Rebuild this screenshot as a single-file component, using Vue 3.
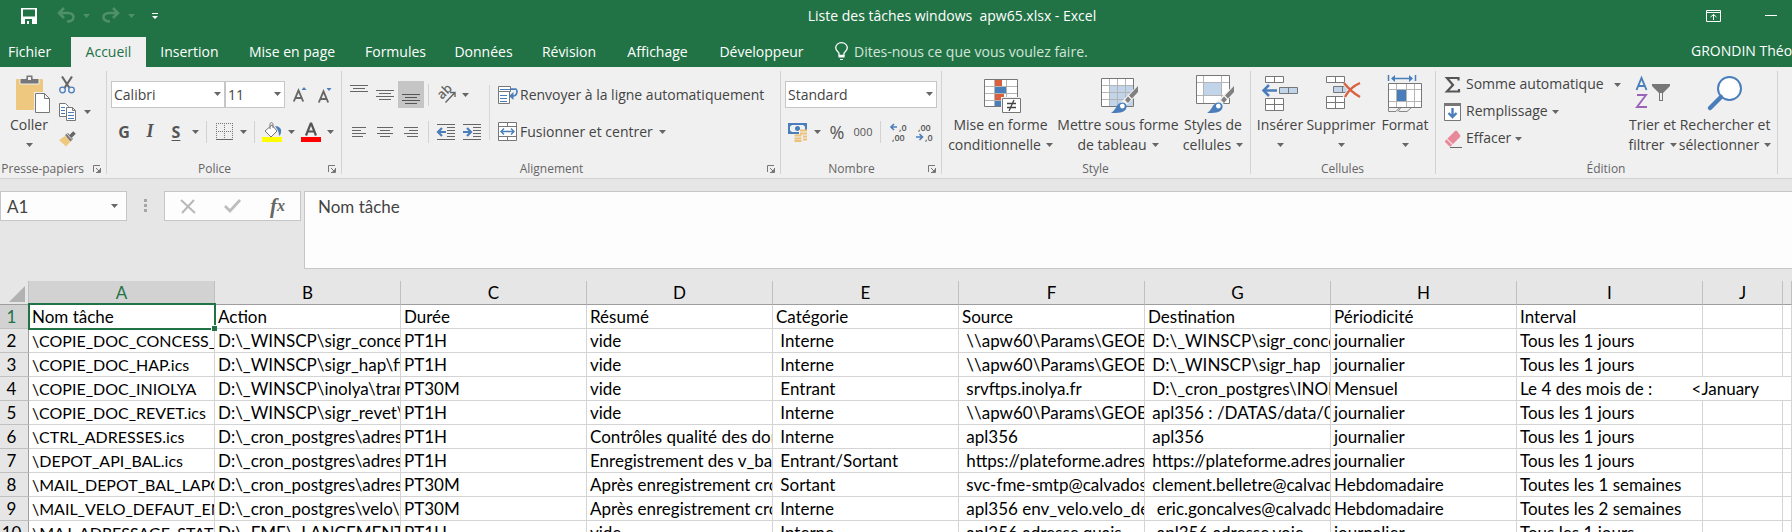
<script setup>
import { h, ref } from 'vue'

const Caret = () =>
  h('svg', { class: 'caret', width: 7, height: 4, viewBox: '0 0 7 4', 'aria-hidden': 'true' }, [
    h('path', { d: 'M0 0H7L3.5 4Z', fill: 'currentColor' })
  ])

const Launcher = () =>
  h('svg', { class: 'launcher', width: 8, height: 8, viewBox: '0 0 8 8', 'aria-hidden': 'true' }, [
    h('path', { d: 'M.5 7V.5H7M3 3L6 6M7.5 3V7.5H3', fill: 'none', stroke: '#777' }),
    h('path', { d: 'M7 4V7H4Z', fill: '#777' })
  ])

const tabs = ['Fichier', 'Accueil', 'Insertion', 'Mise en page', 'Formules', 'Données', 'Révision', 'Affichage', 'Développeur']
const activeTab = ref('Accueil')

const fontName = ref('Calibri')
const fontSize = ref('11')
const numberFormat = ref('Standard')
const cellName = ref('A1')
const formula = ref('Nom tâche')

const hAlign = [
  'M0 .5H14M0 3.5H9M0 6.5H14M0 9.5H11',
  'M0 .5H16M3 3.5H13M0 6.5H16M3 9.5H13',
  'M0 .5H14M5 3.5H14M0 6.5H14M3 9.5H14'
]

const columns = ['A', 'B', 'C', 'D', 'E', 'F', 'G', 'H', 'I', 'J', '']

const rows = [
  ['Nom tâche', 'Action', 'Durée', 'Résumé', 'Catégorie', 'Source', 'Destination', 'Périodicité', 'Interval'],
  ['\\COPIE_DOC_CONCESS_TRANS.ics', 'D:\\_WINSCP\\sigr_concess', 'PT1H', 'vide', ' Interne', ' \\\\apw60\\Params\\GEOBASE', ' D:\\_WINSCP\\sigr_concess', 'journalier', 'Tous les 1 jours'],
  ['\\COPIE_DOC_HAP.ics', 'D:\\_WINSCP\\sigr_hap\\ftp', 'PT1H', 'vide', ' Interne', ' \\\\apw60\\Params\\GEOBASE', ' D:\\_WINSCP\\sigr_hap', 'journalier', 'Tous les 1 jours'],
  ['\\COPIE_DOC_INIOLYA', 'D:\\_WINSCP\\inolya\\transfert', 'PT30M', 'vide', ' Entrant', ' srvftps.inolya.fr', ' D:\\_cron_postgres\\INOLYA', 'Mensuel', 'Le 4 des mois de :         <January'],
  ['\\COPIE_DOC_REVET.ics', 'D:\\_WINSCP\\sigr_revet\\ftp', 'PT1H', 'vide', ' Interne', ' \\\\apw60\\Params\\GEOBASE', ' apl356 : /DATAS/data/04_', 'journalier', 'Tous les 1 jours'],
  ['\\CTRL_ADRESSES.ics', 'D:\\_cron_postgres\\adresses', 'PT1H', 'Contrôles qualité des données', ' Interne', ' apl356', ' apl356', 'journalier', 'Tous les 1 jours'],
  ['\\DEPOT_API_BAL.ics', 'D:\\_cron_postgres\\adresses', 'PT1H', 'Enregistrement des v_bal', ' Entrant/Sortant', ' https://plateforme.adresse', ' https://plateforme.adresse', 'journalier', 'Tous les 1 jours'],
  ['\\MAIL_DEPOT_BAL_LAPOSTE', 'D:\\_cron_postgres\\adresses', 'PT30M', 'Après enregistrement cron', ' Sortant', ' svc-fme-smtp@calvados.fr', ' clement.belletre@calvados.fr', 'Hebdomadaire', 'Toutes les 1 semaines'],
  ['\\MAIL_VELO_DEFAUT_ENTRETIEN', 'D:\\_cron_postgres\\velo\\', 'PT30M', 'Après enregistrement cron', ' Interne', ' apl356 env_velo.velo_defaut', '  eric.goncalves@calvados.fr', 'Hebdomadaire', 'Toutes les 2 semaines'],
  ['\\MAJ_ADRESSAGE_STATISTIQUE', 'D:\\_FME\\_LANCEMENTS', 'PT1H', 'vide', ' Interne', ' apl356 adresse.quais', '  apl356 adresse.voie', 'journalier', 'Tous les 1 jours']
]

const spills = (row) => row[8].includes('<')
</script>

<template>
  <div class="excel">
    <header class="titlebar">
      <div class="quick">
        <button type="button" aria-label="Enregistrer" class="save">
          <svg width="16" height="16" viewBox="0 0 16 16"><path fill="#fff" fill-rule="evenodd" d="M0 0H16V16H0ZM2 1.500V8.500H14V1.500ZM4 11V16H6V13H8V16H11V11Z" /></svg>
        </button>
        <button type="button" aria-label="Annuler" class="undo">
          <svg width="18" height="15" viewBox="0 0 18 15"><path d="M7 0L2 5L7 10M2.500 5H11C18.500 5 18.500 13.500 10 13.500" fill="none" stroke="#4f9069" stroke-width="2.600" /></svg>
          <Caret />
        </button>
        <button type="button" aria-label="Rétablir" class="redo">
          <svg width="18" height="15" viewBox="0 0 18 15"><path d="M11 0L16 5L11 10M15.500 5H7C-.5 5 -.5 13.500 8 13.500" fill="none" stroke="#4f9069" stroke-width="2.600" /></svg>
          <Caret />
        </button>
        <button type="button" aria-label="Personnaliser" class="custom">
          <svg width="6" height="6" viewBox="0 0 6 6"><path d="M0 0H6V1H0ZM0 3H6L3 6Z" fill="#fff" /></svg>
        </button>
      </div>
      <h1>Liste des tâches windows&nbsp; apw65.xlsx - Excel</h1>
      <div class="window-buttons">
        <button type="button" aria-label="Options d'affichage du ruban">
          <svg width="15" height="12" viewBox="0 0 15 12"><path d="M.5 .5H14.500V11.500H.5ZM0 2.500H15M7.500 10V4.500M4.500 7L7.500 4.500L10.500 7" fill="none" stroke="#fff" /></svg>
        </button>
        <button type="button" aria-label="Réduire">
          <svg width="12" height="1" viewBox="0 0 12 1"><path d="M0 0H12V1H0Z" fill="#fff" /></svg>
        </button>
      </div>
    </header>

    <nav class="tabbar">
      <div class="tabs">
        <button v-for="t in tabs" :key="t" type="button" :class="{ active: t === activeTab, file: t === 'Fichier' }" @click="activeTab = t">{{ t }}</button>
      </div>
      <button type="button" class="tell">
        <svg width="13" height="18" viewBox="0 0 13 18"><path d="M4 13.500V11.500C4 10 .7 9 .7 5.800A5.800 5.200 0 0 1 12.300 5.800C12.300 9 9 10 9 11.500V13.500Z" fill="none" stroke="#fff" stroke-width="1.300" /><path d="M3.500 13.500H9.500V15.500H3.500ZM5 17H8V18H5Z" fill="#fff" /></svg>
        <span>Dites-nous ce que vous voulez faire.</span>
      </button>
      <span class="user">GRONDIN Théo</span>
    </nav>

    <div class="ribbon">
      <section class="group clipboard">
        <div class="body">
          <button type="button" class="big">
            <svg class="pic" width="35" height="38" viewBox="0 0 35 38">
              <rect x="0" y="4" width="27" height="31" rx="1" fill="#edc87e" />
              <path d="M4 3.500H10V0H17V3.500H23V9H4Z" fill="#777" stroke="#f0f0f0" stroke-width="1" />
              <rect x="12" y="2" width="3" height="3" fill="#f0f0f0" />
              <path d="M19.500 18.500H29L34 23.500V37.500H19.500Z" fill="#fff" stroke="#f0f0f0" stroke-width="3" />
              <path d="M19.500 18.500H28.500L33.500 23.500V37.500H19.500ZM28.500 18.500V23.500H33.500" fill="#fff" stroke="#777" />
            </svg>
            <span>Coller</span>
            <span><Caret /></span>
          </button>
          <div class="stack">
            <button type="button" aria-label="Couper">
              <svg width="16" height="18" viewBox="0 0 16 18"><path d="M3 .5L10.500 12M13 .5L5.500 12" stroke="#666" stroke-width="2.200" /><circle cx="3.500" cy="14" r="2.800" fill="none" stroke="#4a7ebb" stroke-width="1.300" /><circle cx="12.500" cy="14" r="2.800" fill="none" stroke="#4a7ebb" stroke-width="1.300" /></svg>
            </button>
            <button type="button" aria-label="Copier">
              <svg width="17" height="18" viewBox="0 0 17 18"><path d="M.5 .5H6.500L9.500 3.500V13.500H.5Z" fill="#fff" stroke="#777" /><path d="M2 4.500H6M2 7.500H6M2 10.500H6" stroke="#4a7ebb" /><path d="M7.500 4.500H13.500L16.500 7.500V17.500H7.500ZM13.500 4.500V7.500H16.500" fill="#fff" stroke="#777" /><path d="M9 9.500H15M9 12.500H15M9 15.500H15" stroke="#4a7ebb" /></svg>
              <Caret />
            </button>
            <button type="button" aria-label="Reproduire la mise en forme">
              <svg width="18" height="16" viewBox="0 0 18 16"><path d="M0 9L6 5L12 10L7 15.500Z" fill="#edc87e" /><path d="M6 4L9 2L14 8L11.500 10.500Z" fill="#777" /><path d="M11.500 5.500L15.500 1.500" stroke="#666" stroke-width="3.500" /><path d="M8 3L13 8.500" stroke="#f0f0f0" stroke-width=".8" /></svg>
            </button>
          </div>
        </div>
        <footer><span>Presse-papiers</span><Launcher /></footer>
      </section>

      <section class="group font">
        <div class="body tools">
          <div class="line">
            <label class="drop wide"><select v-model="fontName" aria-label="Police"><option>Calibri</option></select><Caret /></label>
            <label class="drop narrow"><select v-model="fontSize" aria-label="Taille de police"><option>11</option></select><Caret /></label>
            <button type="button" class="grow first" aria-label="Augmenter la taille">
              <svg width="14" height="16" viewBox="0 0 14 16"><path d="M.8 14.500L5.500 3.500L10.200 14.500M2.500 11H8.500" fill="none" stroke="#666" stroke-width="1.900" /><path d="M8.500 3L11 0L13.500 3Z" fill="#4a7ebb" /></svg>
            </button>
            <button type="button" class="grow" aria-label="Réduire la taille">
              <svg width="14" height="16" viewBox="0 0 14 16"><path d="M.8 15.500L5.500 4.500L10.200 15.500M2.500 12H8.500" fill="none" stroke="#666" stroke-width="1.900" /><path d="M8.500 1L11 4L13.500 1Z" fill="#4a7ebb" /></svg>
            </button>
          </div>
          <div class="line">
            <button type="button" class="w26 bold">G</button>
            <button type="button" class="w26 italic">I</button>
            <button type="button" class="w26 under">S</button>
            <button type="button" class="w13" aria-label="Soulignement"><Caret /></button>
            <i class="sep"></i>
            <button type="button" class="w26" aria-label="Bordures">
              <svg width="17" height="17" viewBox="0 0 17 17"><path d="M.5 0V16M16.500 0V16M0 .5H17M8.500 0V16M0 8.500H17" fill="none" stroke="#777" stroke-dasharray="1 1" /><path d="M0 16.500H17" stroke="#666" /></svg>
            </button>
            <button type="button" class="w13" aria-label="Choix des bordures"><Caret /></button>
            <i class="sep"></i>
            <button type="button" class="w26" aria-label="Couleur de remplissage">
              <svg width="20" height="20" viewBox="0 0 20 20"><path d="M3 9L10 3L15 9L9 15Z" fill="#fff" stroke="#777" /><path d="M8 7V2.500C8 0 11 0 11 2.500V6" fill="none" stroke="#777" /><path d="M13 4C17 4 20 7 19 10C19 12 18 13 17 14C17 10 16 8 13 4Z" fill="#4a7ebb" /><path d="M0 15H20V20H0Z" fill="#ff0" /></svg>
            </button>
            <button type="button" class="w13" aria-label="Choix du remplissage"><Caret /></button>
            <button type="button" class="w26" aria-label="Couleur de police">
              <svg width="20" height="20" viewBox="0 0 20 20"><path d="M5 13.500L9.700 1.500H10.300L15 13.500M6.500 9.500H13.500" fill="none" stroke="#555" stroke-width="2.200" /><path d="M0 15H20V20H0Z" fill="#f00" /></svg>
            </button>
            <button type="button" class="w13" aria-label="Choix de la couleur"><Caret /></button>
          </div>
        </div>
        <footer><span>Police</span><Launcher /></footer>
      </section>

      <section class="group align">
        <div class="body cols">
          <div class="tools">
            <div class="line">
              <button type="button" class="w26 high" aria-label="Aligner en haut"><svg width="18" height="8" viewBox="0 0 18 8"><path d="M0 .5H18M3 3.500H15M0 6.500H18" stroke="#666" /></svg></button>
              <button type="button" class="w26" aria-label="Aligner au centre"><svg width="18" height="10" viewBox="0 0 18 10"><path d="M0 .5H18M3 3.500H15M0 6.500H18M3 9.500H15" stroke="#666" /></svg></button>
              <button type="button" class="w26 pressed" aria-label="Aligner en bas"><svg width="18" height="10" viewBox="0 0 18 10"><path d="M0 .5H18M3 3.500H15M0 6.500H18M3 9.500H15" stroke="#555" /></svg></button>
              <i class="sep"></i>
              <button type="button" class="w26" aria-label="Orientation">
                <svg width="19" height="17" viewBox="0 0 19 17"><text x="0" y="0" transform="translate(5 14) rotate(-45)" font-family="Open Sans, sans-serif" font-size="13" font-weight="600" fill="#666">ab</text><path d="M8.500 16.500L17.500 7M13 6.500H18V11" fill="none" stroke="#666" stroke-width="1.400" /></svg>
              </button>
              <button type="button" class="w13" aria-label="Choix de l'orientation"><Caret /></button>
            </div>
            <div class="line">
              <button v-for="(d, i) in hAlign" :key="i" type="button" class="w26" :aria-label="['Gauche', 'Centrer', 'Droite'][i]">
                <svg :width="i === 1 ? 16 : 14" height="10"><path :d="d" stroke="#666" /></svg>
              </button>
              <i class="sep"></i>
              <button type="button" class="w26" aria-label="Diminuer le retrait">
                <svg width="18" height="16" viewBox="0 0 18 16"><path d="M0 .5H18M10 3.500H18M10 6.500H18M10 9.500H18M10 12.500H18M0 15.500H18" stroke="#666" /><path d="M9 8H2M5 4L1 8L5 12" fill="none" stroke="#4a7ebb" stroke-width="2.200" /></svg>
              </button>
              <button type="button" class="w26" aria-label="Augmenter le retrait">
                <svg width="18" height="16" viewBox="0 0 18 16"><path d="M0 .5H18M10 3.500H18M10 6.500H18M10 9.500H18M10 12.500H18M0 15.500H18" stroke="#666" /><path d="M0 8H7M4 4L8 8L4 12" fill="none" stroke="#4a7ebb" stroke-width="2.200" /></svg>
              </button>
            </div>
          </div>
          <i class="longsep"></i>
          <div class="tools">
            <button type="button" class="line text">
              <svg width="20" height="18" viewBox="0 0 20 18"><path d="M.5 .5H12.500V5.500H.5ZM.5 5.500V17.500H11.500V5.500" fill="#fff" stroke="#777" /><path d="M2 3.500H17M2 9.500H9M2 12.500H9M2 15.500H9" stroke="#4a7ebb" /><path d="M13 3H18C20 5 19 10 15 10" fill="none" stroke="#4a7ebb" stroke-width="1.600" /><path d="M11 10L15.500 6V14Z" fill="#4a7ebb" /></svg>
              <span>Renvoyer à la ligne automatiquement</span>
            </button>
            <button type="button" class="line text">
              <svg width="20" height="19" viewBox="0 0 20 19"><path d="M.5 .5H18.500V18.500H.5ZM.5 4.500H18.500M.5 14.500H18.500M9.500 .5V4.500M9.500 14.500V18.500" fill="#fff" stroke="#777" /><path d="M3 9.500H16M6 6.500L3 9.500L6 12.500M13 6.500L16 9.500L13 12.500" fill="none" stroke="#4a7ebb" stroke-width="1.400" /></svg>
              <span>Fusionner et centrer</span><Caret />
            </button>
          </div>
        </div>
        <footer><span>Alignement</span><Launcher /></footer>
      </section>

      <section class="group number">
        <div class="body tools">
          <div class="line">
            <label class="drop full"><select v-model="numberFormat" aria-label="Format de nombre"><option>Standard</option></select><Caret /></label>
          </div>
          <div class="line">
            <button type="button" class="w26" aria-label="Format comptable">
              <svg width="20" height="20" viewBox="0 0 20 20"><path d="M0 1H19V12H0Z" fill="#4a7ebb" /><path d="M2 4.500L4 3H15L17 4.500V8.500L15 10H4L2 8.500Z" fill="#f0f0f0" /><circle cx="9.500" cy="6.500" r="2.500" fill="#4a7ebb" /><path d="M11 8H20V18H14V20H6V12H11Z" fill="#f0f0f0" /><path d="M12 8.500H19M12 11.500H19M15 14.500H19M15 17.500H19M6.500 13.500H13.500M6.500 16.500H13.500M6.500 19H13.500" stroke="#edc07a" stroke-width="2" /></svg>
            </button>
            <button type="button" class="w13" aria-label="Choix de la devise"><Caret /></button>
            <button type="button" class="w26 percent">%</button>
            <button type="button" class="w26 thousands">000</button>
            <i class="sep"></i>
            <button type="button" class="w26" aria-label="Ajouter une décimale">
              <svg width="17" height="18" viewBox="0 0 17 18"><g font-family="Open Sans, sans-serif" font-size="9" font-weight="600" fill="#555"><text x="9" y="8">,0</text><text x="2" y="18">,00</text></g><path d="M7 4H1M4 1L1 4L4 7" fill="none" stroke="#4a7ebb" stroke-width="1.600" /></svg>
            </button>
            <button type="button" class="w26" aria-label="Réduire les décimales">
              <svg width="17" height="18" viewBox="0 0 17 18"><g font-family="Open Sans, sans-serif" font-size="9" font-weight="600" fill="#555"><text x="2" y="8">,00</text><text x="9" y="18">,0</text></g><path d="M0 14H6M3.500 11L6.500 14L3.500 17" fill="none" stroke="#4a7ebb" stroke-width="1.600" /></svg>
            </button>
          </div>
        </div>
        <footer><span>Nombre</span><Launcher /></footer>
      </section>

      <section class="group style">
        <div class="body bigs">
          <button type="button" class="big">
            <svg class="pic" width="34" height="38" viewBox="0 0 34 38">
              <path d="M.5 4.500H33.500V31.500H.5Z" fill="#fff" />
              <path d="M.5 11.500H33.500M.5 18.500H33.500M.5 25.500H33.500M10.500 4.500V31.500M22.500 4.500V31.500" stroke="#b4b4b4" />
              <path d="M.5 4.500H33.500V31.500H.5Z" fill="none" stroke="#777" />
              <path d="M11 5H18V11H11ZM11 19H20V25H11Z" fill="#d9603f" /><path d="M11 12H22V18H11ZM11 26H17V31H11Z" fill="#4a7ebb" />
              <path d="M18.500 23.500H36.500V37.500H18.500Z" fill="#fff" stroke="#f0f0f0" stroke-width="3" /><path d="M18.500 23.500H36.500V37.500H18.500Z" fill="#fff" stroke="#777" />
              <path d="M23 28.500H32M23 32.500H32M30 25L25 36" stroke="#444" stroke-width="1.300" />
            </svg>
            <span>Mise en forme</span><span>conditionnelle <Caret /></span>
          </button>
          <button type="button" class="big">
            <svg class="pic" width="34" height="38" viewBox="0 0 34 38">
              <path d="M.5 3.500H32.500V31.500H.5Z" fill="#fff" /><path d="M9 10H32V31H9Z" fill="#c1d4e9" />
              <path d="M.5 10.500H32.500M.5 17.500H32.500M.5 24.500H32.500M8.500 3.500V31.500M16.500 3.500V31.500M24.500 3.500V31.500" stroke="#b4b4b4" />
              <path d="M.5 3.500H32.500V31.500H.5Z" fill="none" stroke="#777" />
              <path d="M37 10V19L28 28L14 38L20 27Z" fill="#f0f0f0" />
              <path d="M37 11V17L31 23.500L28 20.500ZM27 21.500L30 24.500L27 28L24 25Z" fill="#808080" />
              <path d="M10 38C15 35 15 30 19 28C24 26 27 30 25 34C23 38 17 38 10 38Z" fill="#4a7ebb" /><path d="M19 30C22 27 25 30 23 33C20 34 19 33 19 30Z" fill="#fff" />
            </svg>
            <span>Mettre sous forme</span><span>de tableau <Caret /></span>
          </button>
          <button type="button" class="big">
            <svg class="pic" width="34" height="38" viewBox="0 0 34 38">
              <path d="M.5 .5H33.500V28.500H.5Z" fill="#fff" /><path d="M8 8H25V20H8Z" fill="#c1d4e9" />
              <path d="M.5 7.500H33.500M.5 20.500H33.500M7.500 .5V28.500M25.500 .5V28.500" stroke="#b4b4b4" />
              <path d="M.5 .5H33.500V28.500H.5Z" fill="none" stroke="#777" />
              <path d="M38 10V19L28 28L14 38L20 27Z" fill="#f0f0f0" />
              <path d="M38 11V17L32 23.500L29 20.500ZM28 21.500L31 24.500L28 28L25 25Z" fill="#808080" />
              <path d="M11 38C16 35 16 30 20 28C25 26 28 30 26 34C24 38 18 38 11 38Z" fill="#4a7ebb" /><path d="M20 30C23 27 26 30 24 33C21 34 20 33 20 30Z" fill="#fff" />
            </svg>
            <span>Styles de</span><span>cellules <Caret /></span>
          </button>
        </div>
        <footer><span>Style</span></footer>
      </section>

      <section class="group cells">
        <div class="body bigs">
          <button type="button" class="big">
            <svg class="pic" width="36" height="38" viewBox="0 0 36 38"><path d="M3.500 1.500H21.500V7.500H3.500ZM12.500 1.500V7.500M3.500 23.500H21.500V35.500H3.500ZM3.500 29.500H21.500M12.500 23.500V35.500" fill="#fff" stroke="#777" /><path d="M17.500 12.500H35.500V18.500H17.500ZM26.500 12.500V18.500" fill="#c1d4e9" stroke="#777" /><path d="M15 15.500H2M7 10L1.500 15.500L7 21" fill="none" stroke="#4a7ebb" stroke-width="2.500" /></svg>
            <span>Insérer</span><span><Caret /></span>
          </button>
          <button type="button" class="big">
            <svg class="pic" width="32" height="38" viewBox="0 0 32 38"><path d="M1.500 1.500H19.500V7.500H1.500ZM10.500 1.500V7.500M1.500 21.500H19.500V33.500H1.500ZM1.500 27.500H19.500M10.500 21.500V33.500" fill="#fff" stroke="#777" /><path d="M8.500 11.500H20L25 14.500L20 17.500H8.500ZM17.500 11.500V17.500" fill="#c1d4e9" stroke="#777" /><path d="M19 8L34 22M34 9C27 12 23 17 20 23" fill="none" stroke="#f0f0f0" stroke-width="5" /><path d="M19 8C23 13 28 18 35 22M35 8C28 11 23 16 20 22" fill="none" stroke="#d9603f" stroke-width="2.300" /></svg>
            <span>Supprimer</span><span><Caret /></span>
          </button>
          <button type="button" class="big">
            <svg class="pic" width="34" height="38" viewBox="0 0 34 38"><path d="M.5 8.500H33.500V32.500H.5Z" fill="#fff" /><path d="M.5 14.500H33.500M.5 26.500H33.500M8.500 8.500V32.500M18.500 8.500V32.500M26.500 8.500V32.500" stroke="#b4b4b4" /><path d="M.5 8.500H33.500V32.500H.5Z" fill="none" stroke="#777" /><path d="M.5 32.500V36.500H8L11 33M11 36.500H19L23 33M10 36.500L12.500 33" fill="none" stroke="#888" /><path d="M9 15H18V26H9Z" fill="#4a7ebb" /><path d="M.5 0V6M27.500 0V6M4 3.500H24" stroke="#4a7ebb" stroke-width="1.500" /><path d="M3 3.500L7 0V7ZM25 3.500L21 0V7Z" fill="#4a7ebb" /></svg>
            <span>Format</span><span><Caret /></span>
          </button>
        </div>
        <footer><span>Cellules</span></footer>
      </section>

      <section class="group edit">
        <div class="body bigs">
          <div class="list">
            <button type="button"><svg width="18" height="18" viewBox="0 0 18 18"><path d="M14.500 4.500V2H3L9 9L3 15.500H15V13" fill="none" stroke="#555" stroke-width="2.200" /></svg><span>Somme automatique</span><Caret class="far" /></button>
            <button type="button"><svg width="18" height="18" viewBox="0 0 18 18"><path d="M.5 .5H16.500V17.500H.5Z" fill="#fff" stroke="#777" /><path d="M0 0H17V3H0Z" fill="#777" /><path d="M8.500 5V14M4.500 10L8.500 14L12.500 10" fill="none" stroke="#4a7ebb" stroke-width="2.400" /></svg><span>Remplissage</span><Caret /></button>
            <button type="button"><svg width="18" height="18" viewBox="0 0 18 18"><path d="M1 11L11 1Q12 0 13 1L16 5Q17 6 16 7L7 16Q6 17 5 16L1 12Z" fill="#e8899a" /><path d="M3 9L9 15" stroke="#f6dbe0" stroke-width="1.200" /><path d="M6 17.500H18" stroke="#666" /></svg><span>Effacer</span><Caret /></button>
          </div>
          <button type="button" class="big">
            <svg class="pic" width="36" height="38" viewBox="0 0 36 38"><path d="M1.500 15L6.500 3L11.500 15M3 11H10" fill="none" stroke="#4a7ebb" stroke-width="1.900" /><path d="M2 20H11L2 32H12" fill="none" stroke="#9a64b8" stroke-width="1.900" /><path d="M17 9H35V11L28 18V26H24V18L17 11Z" fill="#777" /><path d="M25 18V25H27V18" fill="#f0f0f0" /></svg>
            <span>Trier et</span><span>filtrer <Caret /></span>
          </button>
          <button type="button" class="big">
            <svg class="pic" width="36" height="38" viewBox="0 0 36 38"><circle cx="22.500" cy="13.500" r="11.500" fill="#fff" stroke="#4a7ebb" stroke-width="2" /><path d="M14 22L3 33" stroke="#4a7ebb" stroke-width="4.500" stroke-linecap="round" /></svg>
            <span>Rechercher et</span><span>sélectionner <Caret /></span>
          </button>
        </div>
        <footer><span>Édition</span></footer>
      </section>
    </div>

    <div class="formula">
      <label class="namebox"><input v-model="cellName" aria-label="Zone Nom" /><Caret /></label>
      <svg class="dots" width="3" height="14" viewBox="0 0 3 14"><path d="M0 0H3V3H0ZM0 5H3V8H0ZM0 10H3V13H0Z" fill="#a6a6a6" /></svg>
      <div class="fxbox">
        <button type="button" aria-label="Annuler la saisie"><svg width="16" height="15" viewBox="0 0 16 15"><path d="M1 1L15 14M14 1L2 14" stroke="#b8b8b8" stroke-width="2" /></svg></button>
        <button type="button" aria-label="Valider"><svg width="17" height="14" viewBox="0 0 17 14"><path d="M1 7L6 12L16 1" fill="none" stroke="#bdbdbd" stroke-width="2.800" /></svg></button>
        <button type="button" class="fx" aria-label="Insérer une fonction"><b>f</b><small>x</small></button>
      </div>
      <textarea v-model="formula" aria-label="Barre de formule" spellcheck="false"></textarea>
    </div>

    <table class="sheet">
      <colgroup>
        <col class="c-head" /><col v-for="n in 9" :key="n" class="c-wide" /><col class="c-j" /><col />
      </colgroup>
      <thead>
        <tr>
          <th class="corner"><svg width="16" height="16" viewBox="0 0 16 16"><path d="M16 0V16H0Z" fill="#b2b2b2" /></svg></th>
          <th v-for="c in columns" :key="c" :class="{ on: c === 'A' }"><div>{{ c }}</div></th>
        </tr>
      </thead>
      <tbody>
        <tr v-for="(row, r) in rows" :key="r">
          <th :class="{ on: r === 0 }"><div>{{ r + 1 }}</div></th>
          <td v-for="(cell, c) in row" :key="c" :colspan="spills(row) && c === 8 ? 3 : 1" :class="{ selected: r === 0 && c === 0, task: r > 0 && c === 0 }"><div>{{ cell }}</div></td>
          <template v-if="!spills(row)"><td></td><td></td></template>
        </tr>
      </tbody>
    </table>
  </div>
</template>

<style>
html, body { margin: 0; overflow: hidden; }
</style>

<style scoped>
.excel { height: 100vh; overflow: hidden; background: #e6e6e6; font-family: "Open Sans", "Noto Sans", sans-serif; font-size: 14px; color: #444; }
button { border: 0; padding: 0; margin: 0; background: none; font: inherit; color: inherit; display: flex; align-items: center; justify-content: center; white-space: nowrap; }
svg { display: block; flex: none; overflow: visible; }
.caret { color: #666; }

.titlebar { height: 37px; box-sizing: border-box; padding-bottom: 6px; background: #217346; display: grid; grid-template-columns: 1fr auto 1fr; align-items: center; color: #fff; }
.titlebar h1 { margin: 0; font-size: 14px; font-weight: 400; line-height: 20px; padding-left: 112px; }
.quick { display: flex; align-items: center; padding-left: 21px; height: 16px; }
.quick .caret { color: #4f9069; }
.undo, .redo { gap: 8px; }
.undo { margin-left: 20px; }
.redo { margin-left: 12px; }
.custom { margin-left: 17px; }
.window-buttons { display: flex; justify-content: flex-end; gap: 44px; padding-right: 15px; }

.tabbar { height: 30px; background: #217346; color: #fff; display: flex; align-items: stretch; overflow: hidden; }
.tabs { display: grid; grid-template-columns: 71px 75px 87px 118px 89px 87px 84px 93px 115px; flex: none; }
.tabs button, .tell { padding-bottom: 2px; }
.tabs .file { justify-content: flex-start; padding-left: 8px; }
.tabs .active { background: #f0f0f0; color: #217346; }
.tell { margin-left: 16px; gap: 6px; color: #d3e5da; }
.user { margin-left: auto; line-height: 28px; white-space: nowrap; width: 101px; }

.ribbon { display: flex; background: #f0f0f0; padding-top: 4px; border-bottom: 1px solid #d2d2d2; overflow: hidden; }
.group { position: relative; flex: none; box-sizing: border-box; display: flex; flex-direction: column; }
.group::after { content: ""; position: absolute; right: 0; top: 0; bottom: 4px; width: 1px; background: #d2d2d2; }
.clipboard { width: 107px; }
.font { width: 235px; }
.align { width: 439px; }
.number { width: 161px; }
.style { width: 309px; }
.cells { width: 185px; }
.edit { width: 342px; }
.body { height: 89px; box-sizing: border-box; display: flex; }
.group footer { height: 18px; display: flex; align-items: center; font-size: 12px; line-height: 18px; color: #666; padding-right: 6px; }
.group footer span { flex: 1; text-align: center; white-space: nowrap; padding-right: 6px; }
.style footer, .cells footer, .edit footer { padding-right: 0; }
.style footer span, .cells footer span, .edit footer span { padding-right: 2px; }
.clipboard footer span { display: flex; justify-content: flex-end; padding-right: 9px; }

.big { flex-direction: column; justify-content: flex-start; padding-top: 4px; line-height: 20px; }
.big .pic { margin-bottom: 2px; }
.big span { display: flex; align-items: center; gap: 5px; height: 20px; }
.bigs { display: grid; align-items: start; }
.style .bigs { grid-template-columns: 105px 130px 60px; padding-left: 6px; }
.cells .bigs { grid-template-columns: 52px 70px 58px; padding-left: 3px; }
.edit .bigs { grid-template-columns: 184px 49px 96px; padding-left: 8px; }

.clipboard .big { width: 58px; box-sizing: border-box; }
.clipboard .big .pic { margin-left: 8px; }
.stack { display: flex; flex-direction: column; padding-left: 1px; }
.stack button { height: 27px; justify-content: flex-start; gap: 8px; }

.tools { display: flex; flex-direction: column; gap: 10px; padding-top: 10px; }
.line { display: flex; align-items: center; height: 27px; }
.font .tools { padding-left: 4px; }
.drop { position: relative; display: block; height: 27px; }
.drop select { appearance: none; width: 100%; height: 27px; box-sizing: border-box; border: 1px solid #c6c6c6; border-radius: 0; background: #fff; font: inherit; color: #444; padding: 0 16px 1px 2px; }
.drop .caret { position: absolute; right: 4px; top: 11px; }
.wide { width: 114px; }
.narrow { width: 60px; }
.full { width: 152px; }
.grow { width: 25px; }
.first { margin-left: 2px; }
.w26 { width: 26px; height: 27px; }
.w13 { width: 13px; height: 27px; }
.sep { width: 1px; height: 22px; background: #d2d2d2; margin: 0 4px; }
.high { align-items: flex-start; padding-top: 4px; box-sizing: border-box; }
.pressed { background: #c5c5c5; align-items: flex-end; padding-bottom: 4px; box-sizing: border-box; }
.bold, .italic, .under { font-weight: 700; font-size: 16px; color: #555; }
.italic { font-family: "Liberation Serif", serif; font-style: italic; font-size: 18px; }
.under { text-decoration: underline; text-underline-offset: 2px; }

.align .cols { padding-left: 4px; }
.longsep { width: 1px; height: 55px; margin: 14px 8px 0 4px; background: #d8d8d8; }
.text { gap: 2px; justify-content: flex-start; }
.text .caret { margin-left: 4px; }

.number .tools { padding-left: 4px; }
.percent { font-size: 18px; color: #555; }
.thousands { font-size: 11px; color: #555; }

.list { display: flex; flex-direction: column; }
.list button { height: 27px; justify-content: flex-start; gap: 4px; }
.list button span { padding-bottom: 2px; }
.list .far { margin-left: 6px; }

.formula { display: flex; align-items: flex-start; padding: 12px 0; }
.namebox { position: relative; width: 127px; height: 30px; }
.namebox input { width: 100%; height: 30px; box-sizing: border-box; border: 1px solid #c6c6c6; background: #fdfdfd; font: 17px Lato, sans-serif; color: #444; padding: 0 0 0 6px; }
.namebox .caret { position: absolute; right: 9px; top: 13px; }
.dots { margin: 8px 17px 0; }
.fxbox { display: grid; grid-template-columns: repeat(3, 45px); width: 137px; height: 30px; box-sizing: border-box; border: 1px solid #c6c6c6; background: #fdfdfd; }
.fx { font-family: "Liberation Serif", serif; font-style: italic; color: #666; font-size: 21px; line-height: 20px; }
.fx small { font-size: 16px; font-weight: 700; }
.formula textarea { flex: 1; height: 78px; box-sizing: border-box; margin-left: 3px; border: 1px solid #c6c6c6; border-right: 0; background: #fdfdfd; resize: none; outline: 0; overflow: hidden; padding: 3px 13px; font: 17px/24px Lato, sans-serif; color: #444; }

.sheet { width: 100%; table-layout: fixed; border-collapse: separate; border-spacing: 0; font: 17px/22px Lato, sans-serif; color: #000; }
.c-head { width: 29px; }
.c-wide { width: 186px; }
.c-j { width: 80px; }
.sheet th { font-weight: 400; padding: 0; background: #e6e6e6; border-right: 1px solid #c0c0c0; border-bottom: 1px solid #c0c0c0; height: 23px; }
.sheet th div { padding-top: 1px; }
.sheet thead th { border-bottom-color: #9e9e9e; }
.sheet tbody th { border-right-color: #9e9e9e; padding-right: 5px; }
.sheet th.on { background: #d2d2d2; color: #217346; }
.corner svg { margin: 3px 0 0 9px; }
.sheet td { position: relative; padding: 0; height: 23px; background: #fff; border-right: 1px solid #d4d4d4; border-bottom: 1px solid #d4d4d4; }
.sheet td div { overflow: hidden; white-space: pre; padding: 1px 0 0 3px; }
.sheet .task { font-size: 16px; }
.selected::before { content: ""; position: absolute; z-index: 1; inset: -2px -2px -2px -1px; border: 2px solid #217346; }
.selected::after { content: ""; position: absolute; z-index: 2; right: -3px; bottom: -3px; width: 5px; height: 5px; background: #217346; border: solid #fff; border-width: 1px 0 0 1px; }
</style>
